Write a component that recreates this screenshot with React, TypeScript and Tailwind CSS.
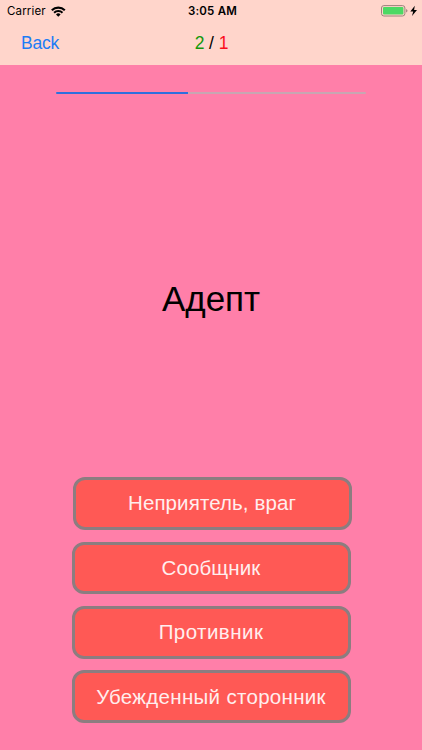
type Answer = { label: string; box: string; text: string };

const answers: Answer[] = [
  { label: "Неприятель, враг", box: "ml-px", text: "tracking-[0.1px]" },
  { label: "Сообщник", box: "mt-[12px]", text: "tracking-[0.1px]" },
  { label: "Противник", box: "mt-[12px]", text: "-mt-px tracking-[0.45px]" },
  { label: "Убежденный сторонник", box: "mt-[11px]", text: "tracking-[0.31px]" },
];

function WifiIcon() {
  return (
    <svg width="15" height="11" viewBox="0 0 15 11" fill="none" stroke="#000">
      <path d="M0.8 4.2A9.4 9.4 0 0 1 13.8 4.2" strokeWidth="2.1" />
      <path d="M3.1 6.7A6 6 0 0 1 11.5 6.7" strokeWidth="2" />
      <path d="M7.3 10.7L5 8.4A3.2 3.2 0 0 1 9.6 8.4Z" fill="#000" stroke="none" />
    </svg>
  );
}

function BatteryIcon() {
  return (
    <svg width="37" height="12" viewBox="0 0 37 12">
      <rect x="0.5" y="0.6" width="23.4" height="10.4" rx="2.4" fill="none" stroke="#9c827b" />
      <rect x="2" y="2.1" width="20.4" height="7.4" rx="1" fill="#4cd964" />
      <path d="M25.1 4.1Q26.5 4.5 26.5 5.8T25.1 7.5Z" fill="#9c827b" />
      <path d="M33.8 0.8L29.3 6.5H32.2L31 11L36 5H33.1Z" fill="#000" />
    </svg>
  );
}

export default function App() {
  return (
    <main className="flex h-[750px] w-[422px] flex-col overflow-hidden bg-[#ff7fa9] font-['Liberation_Sans',Arial,sans-serif] text-black">
      <header className="h-[65px] shrink-0 bg-[#ffd5cb]">
        <div className="grid h-[22px] grid-cols-3 items-center px-[7px] font-[Inter,sans-serif] text-[11.5px] leading-[22px]">
          <div className="flex items-center gap-[5px]">
            <span className="tracking-[0.15px]">Carrier</span>
            <WifiIcon />
          </div>
          <span className="pl-[3px] text-center font-semibold tracking-[0.2px]">3:05 AM</span>
          <div className="-mr-[3px] flex justify-end">
            <BatteryIcon />
          </div>
        </div>
        <nav className="grid h-[43px] grid-cols-3 items-center px-[21px] text-[17.5px]">
          <button className="text-left tracking-[-0.25px] text-[#1c7cf5]">Back</button>
          <div className="pl-px text-center tracking-[-0.1px]">
            <span className="text-[#15980b]">2</span> / <span className="text-[#fb0d1b]">1</span>
          </div>
        </nav>
      </header>
      <div className="mt-[27px] ml-[56px] flex h-[2px] w-[310px] shrink-0 overflow-hidden rounded-full bg-[#c8a6b2]">
        <div className="w-[131.5px] bg-[#2f6fdd]" />
      </div>
      <h1 className="mt-[182px] h-[46px] shrink-0 text-center text-[35px] leading-[46px]">Адепт</h1>
      <div className="mt-[155px] ml-[71.5px] flex w-[279px] flex-col">
        {answers.map((a) => (
          <button
            key={a.label}
            className={`flex h-[52.7px] w-[279px] shrink-0 items-center justify-center rounded-[12px] border-[3px] border-[#8c7d80] bg-[#ff5955] pt-px text-[20.5px] whitespace-nowrap text-[#ffeeee] ${a.box}`}
          >
            <span className={a.text}>{a.label}</span>
          </button>
        ))}
      </div>
    </main>
  );
}
